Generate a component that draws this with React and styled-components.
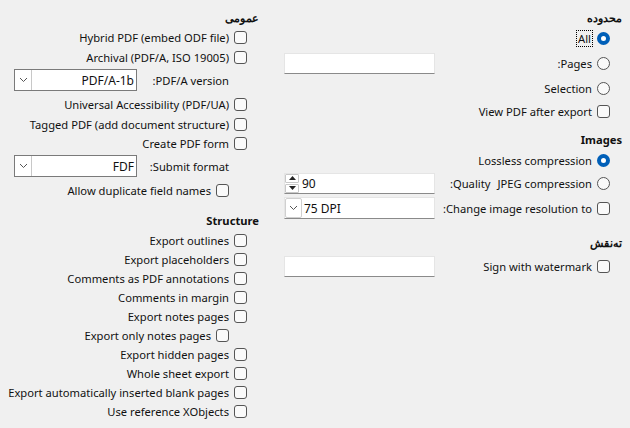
import React from 'react';
import styled, { createGlobalStyle } from 'styled-components';

const GlobalStyle = createGlobalStyle`
  html, body {
    margin: 0;
    padding: 0;
    background: #f0f0f0;
  }
  body {
    font-family: "Noto Sans", "Segoe UI", sans-serif;
    font-size: 11.2px;
    color: #111;
  }
`;

const Dialog = styled.div`
  direction: rtl;
  width: 630px;
  height: 428px;
  display: grid;
  grid-template-columns: 360px 270px;
  background: #f0f0f0;
  overflow: hidden;
`;

const Column = styled.div`
  display: flex;
  flex-direction: column;
  padding-right: ${p => p.$pr}px;
  padding-left: 14px;
`;

const Heading = styled.div`
  height: ${p => p.$h || 20}px;
  margin-top: ${p => p.$mt || 0}px;
  display: flex;
  align-items: center;
  font-weight: bold;
`;

const Row = styled.div`
  height: ${p => p.$h || 19}px;
  display: flex;
  align-items: center;
  justify-content: space-between;
  padding-right: ${p => 12 + (p.$indent || 0)}px;
`;

const Option = styled.label`
  display: flex;
  align-items: center;
  gap: 5px;
  white-space: nowrap;
`;

const Plain = styled.span`
  display: flex;
  align-items: center;
  gap: 7px;
  padding-right: 18px;
  white-space: nowrap;
`;

const Box = styled.span`
  width: 11px;
  height: 11px;
  border: 1px solid #555;
  border-radius: 3px;
  background: #fafafa;
  flex: none;
`;

const Radio = styled.span`
  box-sizing: border-box;
  width: 13px;
  height: 13px;
  border-radius: 50%;
  flex: none;
  border: ${p => (p.$on ? '4px solid #005fb8' : '1px solid #555')};
  background: ${p => (p.$on ? '#fff' : '#fafafa')};
`;

const Focus = styled.span`
  outline: 1px dotted #000;
  outline-offset: 0;
  padding: 0 1px;
`;

const Entry = styled.div`
  box-sizing: border-box;
  width: ${p => p.$w || 151}px;
  height: ${p => p.$h || 21}px;
  background: #fff;
  border: 1px solid #e5e5e5;
  border-bottom: 1px solid #8a8a8a;
  display: flex;
  align-items: center;
  direction: ltr;
  font-size: 12px;
`;

const Combo = styled.div`
  box-sizing: border-box;
  width: 123px;
  height: 22px;
  background: #fff;
  border: 1px solid #7a7a7a;
  display: flex;
  align-items: center;
  direction: ltr;
  font-size: 12px;
`;

const ArrowCell = styled.div`
  box-sizing: border-box;
  width: 17px;
  height: 100%;
  border-right: 1px solid #c8c8c8;
  display: flex;
  align-items: center;
  justify-content: center;
  flex: none;
  ${p => p.$boxed && `
    border: 1px solid #d0d0d0;
    border-radius: 2px;
    height: 20px;
    margin-top: -1px;
  `}
`;

const ComboText = styled.span`
  flex: 1;
  text-align: right;
  padding-right: 2px;
`;

const EntryText = styled.span`
  padding-left: 2px;
`;

const SpinCell = styled.div`
  width: 14px;
  display: flex;
  flex-direction: column;
  gap: 1px;
  margin-left: 0;
  margin-right: 3px;
`;

const SpinButton = styled.div`
  box-sizing: border-box;
  height: 9px;
  border: 1px solid #c8c8c8;
  border-radius: 1px;
  display: flex;
  align-items: center;
  justify-content: center;
`;

const Chevron = () => (
  <svg width="9" height="6" viewBox="0 0 9 6">
    <path d="M1 1 L4.5 4.5 L8 1" fill="none" stroke="#555" strokeWidth="1" />
  </svg>
);

const Spin = () => (
  <SpinCell>
    <SpinButton>
      <svg width="7" height="4" viewBox="0 0 7 4">
        <path d="M0 4 L3.5 0 L7 4 Z" fill="#222" />
      </svg>
    </SpinButton>
    <SpinButton>
      <svg width="7" height="4" viewBox="0 0 7 4">
        <path d="M0 0 L3.5 4 L7 0 Z" fill="#222" />
      </svg>
    </SpinButton>
  </SpinCell>
);

const Check = ({ children, h, indent }) => (
  <Row $h={h} $indent={indent}>
    <Option>
      <Box />
      {children}
    </Option>
  </Row>
);

const structure = [
  'Export outlines',
  'Export placeholders',
  'Comments as PDF annotations',
  'Comments in margin',
  'Export notes pages',
  'Export only notes pages',
  'Export hidden pages',
  'Whole sheet export',
  'Export automatically inserted blank pages',
  'Use reference XObjects',
];

const App = () => {
  return (
    <>
      <GlobalStyle />
      <Dialog>
        {/* ------------------------ range / images / watermark ------------------------ */}
        <Column $pr={8}>
          <Heading $mt={7}>محدوده</Heading>
          <Row $h={22}>
            <Option>
              <Radio $on />
              <Focus>All</Focus>
            </Option>
          </Row>
          <Row $h={28}>
            <Option>
              <Radio />
              Pages:
            </Option>
            <Entry />
          </Row>
          <Row $h={22}>
            <Option>
              <Radio />
              Selection
            </Option>
          </Row>
          <Row $h={24}>
            <Option>
              <Box />
              View PDF after export
            </Option>
          </Row>

          <Heading $mt={5} $h={22}>Images</Heading>
          <Row $h={20}>
            <Option>
              <Radio $on />
              Lossless compression
            </Option>
          </Row>
          <Row $h={26}>
            <Option>
              <Radio />
              JPEG compression
              <span style={{ marginRight: 2 }}>Quality:</span>
            </Option>
            <Entry>
              <Spin />
              <span>90</span>
            </Entry>
          </Row>
          <Row $h={24}>
            <Option>
              <Box />
              Change image resolution to:
            </Option>
            <Entry $h={22}>
              <ArrowCell $boxed>
                <Chevron />
              </ArrowCell>
              <EntryText>75 DPI</EntryText>
            </Entry>
          </Row>

          <Heading $mt={12}>تەنقش</Heading>
          <Row $h={28}>
            <Option>
              <Box />
              Sign with watermark
            </Option>
            <Entry />
          </Row>
        </Column>

        {/* ------------------------ general / structure ------------------------ */}
        <Column $pr={11}>
          <Heading $mt={7}>عمومی</Heading>
          <Check h={21}>Hybrid PDF (embed ODF file)</Check>
          <Check h={18}>Archival (PDF/A, ISO 19005)</Check>
          <Row $h={28}>
            <Plain>PDF/A version:</Plain>
            <Combo>
              <ArrowCell>
                <Chevron />
              </ArrowCell>
              <ComboText>PDF/A-1b</ComboText>
            </Combo>
          </Row>
          <Check h={20}>Universal Accessibility (PDF/UA)</Check>
          <Check h={20}>Tagged PDF (add document structure)</Check>
          <Check h={18}>Create PDF form</Check>
          <Row $h={28}>
            <Plain>Submit format:</Plain>
            <Combo>
              <ArrowCell>
                <Chevron />
              </ArrowCell>
              <ComboText>FDF</ComboText>
            </Combo>
          </Row>
          <Check h={20} indent={18}>
            Allow duplicate field names
          </Check>

          <Heading $mt={9} $h={22}>Structure</Heading>
          {structure.map((item, i) => (
            <Check key={item} h={19} indent={i === 5 ? 18 : 0}>
              {item}
            </Check>
          ))}
        </Column>
      </Dialog>
    </>
  );
};

export default App;
